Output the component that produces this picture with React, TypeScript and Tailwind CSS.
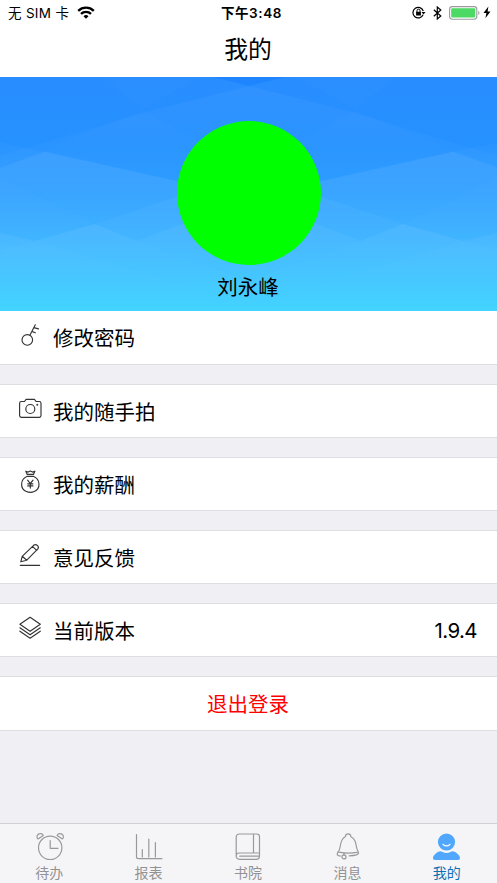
import type { ReactNode } from "react";

const FONT = "font-['Inter','Noto_Sans_CJK_SC',sans-serif]";

function StatusBar() {
  return (
    <div className="relative flex h-[26px] items-center justify-between pl-2 pr-1.5 text-[13.5px] leading-[26px]">
      <div className="flex items-center gap-[8px]">
        <span className="whitespace-pre tracking-[0.3px]">无 SIM 卡</span>
        <svg className="-mt-[2px]" width="18" height="13" viewBox="0 0 18 13" fill="none" stroke="#000" strokeWidth="2.3">
          <path d="M1.2 4.8a11.2 11.2 0 0 1 15.6 0" />
          <path d="M4 7.9a7.2 7.2 0 0 1 10 0" />
          <path d="M6.5 10.2a3.7 3.7 0 0 1 5 0L9 12.8z" fill="#000" stroke="none" />
        </svg>
      </div>
      <span className="absolute inset-x-0 top-0 pl-[6px] text-center font-semibold tracking-[0.6px]">
        下午3:48
      </span>
      <div className="-mt-px flex items-center">
        <svg width="14" height="13" viewBox="0 0 14 13" fill="none" stroke="#000" strokeWidth="1.2">
          <path d="M11.1 8.8A5.3 5.3 0 1 1 11.3 5" />
          <path d="M9.5 5.9h4l-2 2.7z" fill="#000" stroke="none" />
          <rect x="4.1" y="5.8" width="4.8" height="3.7" fill="#000" stroke="none" />
          <path d="M5 6V4.7a1.5 1.5 0 0 1 3 0V6" strokeWidth="1" />
        </svg>
        <svg className="ml-[7px]" width="9" height="14" viewBox="0 0 9 14" fill="none" stroke="#000" strokeWidth="1.2">
          <path d="M.8 3.7l7 6.3-3.5 3V1l3.5 3-7 6.3" />
        </svg>
        <svg className="ml-[7px]" width="32" height="14" viewBox="0 0 32 14">
          <rect x=".6" y=".6" width="27.2" height="12.6" rx="2.6" fill="#fff" stroke="#9b9b9b" strokeWidth="1.1" />
          <rect x="2.2" y="2.2" width="24" height="9.4" rx="1" fill="#4cd964" />
          <path d="M29.3 4.7c1.6.8 1.6 3.6 0 4.4z" fill="#9b9b9b" />
        </svg>
        <svg className="ml-[2px]" width="8" height="13" viewBox="0 0 8 13">
          <path d="M5.4.5L.5 7h2.9l-1 5.2L7.5 5.5H4.6z" />
        </svg>
      </div>
    </div>
  );
}

// left half of the banner, mirrored for the right half
function BannerSide() {
  return (
    <g>
      <path d="M0 79L143 36 249 9V234H0z" fill="url(#beam)" />
      <path d="M0 90.7L143 34 197 63 249 90V120L45 74.7z" fill="url(#beam)" fillOpacity=".5" />
      <path d="M103 0L143 33 200 0z" fill="#fff" fillOpacity=".01" />
      <path d="M0 65.5L45 74.7 0 90.7z" fill="#fff" fillOpacity=".03" />
      <path d="M0 90.7L45 74.7 249 120V234H0z" fill="url(#fade)" />
      <path d="M0 101L95 147 35 164 0 172.5z" fill="#fff" fillOpacity=".02" />
      <path d="M95 147L177 119.7 249 98V202L137 164z" fill="url(#mid)" />
      <path d="M0 172.5L35 164 95 147 137 164 237 200 249 205V234H0z" fill="url(#low)" />
      <path d="M137 164L182 147 249 122V205z" fill="url(#low)" fillOpacity=".6" />
      <path d="M0 155.7L35 164 0 172.5z" fill="#fff" fillOpacity=".05" />
      <path d="M0 172.5L35 164 95 182 230 223 249 229V234H0z" fill="url(#low)" fillOpacity=".3" />
    </g>
  );
}

function Banner() {
  return (
    <div className="relative h-[234px]">
      <svg className="absolute inset-0" width="497" height="234" viewBox="0 0 497 234">
        <defs>
          <linearGradient id="sky" x1="0" y1="0" x2="0" y2="1">
            <stop offset="0" stopColor="#298dff" />
            <stop offset=".3" stopColor="#2592ff" />
            <stop offset=".5" stopColor="#2a9eff" />
            <stop offset=".68" stopColor="#33afff" />
            <stop offset="1" stopColor="#42d5ff" />
          </linearGradient>
          <linearGradient id="beam" gradientUnits="userSpaceOnUse" x1="0" y1="0" x2="0" y2="130">
            <stop offset="0" stopColor="#fff" stopOpacity=".04" />
            <stop offset="1" stopColor="#fff" stopOpacity=".005" />
          </linearGradient>
          <linearGradient id="fade" gradientUnits="userSpaceOnUse" x1="0" y1="74" x2="0" y2="234">
            <stop offset="0" stopColor="#fff" stopOpacity=".09" />
            <stop offset=".6" stopColor="#fff" stopOpacity=".04" />
            <stop offset="1" stopColor="#fff" stopOpacity="0" />
          </linearGradient>
          <linearGradient id="mid" gradientUnits="userSpaceOnUse" x1="0" y1="119" x2="0" y2="200">
            <stop offset="0" stopColor="#fff" stopOpacity=".045" />
            <stop offset="1" stopColor="#fff" stopOpacity="0" />
          </linearGradient>
          <linearGradient id="low" gradientUnits="userSpaceOnUse" x1="0" y1="145" x2="0" y2="230">
            <stop offset="0" stopColor="#fff" stopOpacity=".085" />
            <stop offset="1" stopColor="#fff" stopOpacity="0" />
          </linearGradient>
        </defs>
        <rect width="497" height="234" fill="url(#sky)" />
        <path d="M213 0h72l-36 9z" fill="#1e85ff" />
        <BannerSide />
        <g transform="matrix(-1 0 0 1 498 0)">
          <BannerSide />
        </g>
      </svg>
      <div className="relative flex flex-col items-center pt-[44px]">
        <div className="size-36 rounded-full bg-[#00ff00]" />
        <div className="mt-[7px] pr-px text-[20.5px] leading-8">刘永峰</div>
      </div>
    </div>
  );
}

function RowIcon({ children }: { children: ReactNode }) {
  return (
    <svg
      className="mr-[11px] -mt-[5px]"
      width="24"
      height="24"
      viewBox="0 0 24 24"
      fill="none"
      stroke="#333"
      strokeWidth="1.15"
      strokeLinecap="round"
      strokeLinejoin="round"
    >
      {children}
    </svg>
  );
}

const rows = [
  {
    label: "修改密码",
    icon: (
      <>
        <circle cx="9.3" cy="16.9" r="5.3" />
        <path d="M11.9 12.2L17.3 1.8M15.9 4.6l4.6 1.3M13.8 8.4l3.5 1.4" />
      </>
    ),
  },
  {
    label: "我的随手拍",
    icon: (
      <>
        <path d="M3.3 4.5h3.2L8.1 2.4h8.4l1.6 2.1h3.2c1 0 1.7.7 1.7 1.7v12.4c0 1-.7 1.7-1.7 1.7h-18c-1 0-1.7-.7-1.7-1.7V6.2c0-1 .7-1.7 1.7-1.7z" />
        <circle cx="12.3" cy="12" r="4.5" />
        <circle cx="19.3" cy="7.7" r=".4" fill="#333" />
      </>
    ),
  },
  {
    label: "我的薪酬",
    icon: (
      <>
        <path d="M9.3 6.3C2 9.300 1.800 18.900 8.300 21.500c2.400 1 5.600 1 8 0 6.500-2.600 6.300-12.200-1-15.200zM9 4.400h6.600M9.200 4.200L7.800 1.200l2.400.9 2.100-1 2.200 1 2.400-.9-1.400 3" />
        <path d="M9.600 10.100l2.700 3.500 2.700-3.500M12.300 13.600v4.500M9.700 13.800h5.200M9.700 15.900h5.200" />
      </>
    ),
  },
  {
    label: "意见反馈",
    icon: (
      <>
        <path d="M2.800 18.800l1.400-5.500L15.600 2.300c2.600-2 6 .9 4.300 3.600L8.800 17.200zM4.200 13.300l4.600 3.900M14.500 3.400l4.200 3.900" />
        <path d="M2.400 22.400h19.200" />
      </>
    ),
  },
  {
    label: "当前版本",
    value: "1.9.4",
    icon: (
      <>
        <path d="M12.1 1.300L22.300 8.300 12.100 15.300 1.900 8.300z" />
        <path d="M1.900 11.800l10.200 7 10.200-7M1.900 15.200l10.200 7 10.200-7" />
      </>
    ),
  },
];

const tabs = [
  {
    label: "待办",
    icon: (
      <>
        <circle cx="14.2" cy="15.8" r="11.7" />
        <path d="M14.2 8.600v7.700H22M2 7C.3 5.600 1 2.600 3 1.900s3.500-.3 4.300 1.500zM26.400 7c1.700-1.400 1-4.400-1-5.100s-3.500-.3-4.300 1.500z" />
      </>
    ),
  },
  {
    label: "报表",
    icon: <path d="M1.500 2.500v22.300c0 1.200.7 1.900 1.900 1.900h23.500M7.300 17.500v7.500M13.800 7v18M20.400 10.500v14.500" />,
  },
  {
    label: "书院",
    icon: (
      <path d="M2.200 23.800V5.200c0-2 1.200-3.200 3.200-3.200h17.400c1.700 0 2.700 1 2.700 2.700v19c0 2.300-1.300 3.600-3.400 3.600H5.700c-2.300 0-3.500-1.200-3.500-3.500 0-1.700 1.200-2.800 3-2.800h20.300M19.500 2v19M5.700 24.200h19.500" />
    ),
  },
  {
    label: "消息",
    icon: (
      <>
        <path d="M6.600 24c-2 0-3.600-.8-3.400-2.200.3-1.700 2.200-2.600 2.800-6.300.7-5.100 1.600-9.200 5.300-10.700.3-3.800 5.300-3.800 5.600 0 4.200 1.600 4.900 6 5.700 10.700.5 3 2 4.100 1.900 5.600-.1 1.700-4.500 2.500-9.300 2.700M4.900 20.200c4.800 1 12.500 1.300 18.200.2" />
        <path d="M10 21.300v2" />
        <circle cx="10" cy="24.900" r="2" />
      </>
    ),
  },
  {
    label: "我的",
    active: true,
    icon: (
      <>
        <path d="M7.200 19.200c1.200 0 3.300 1.700 6.300 1.700s5.100-1.700 6.300-1.700c2.800 0 7.200 4.300 7.200 6.500 0 1.500-.7 2.200-2.100 2.200H2.100C.7 27.900 0 27.200 0 25.700c0-2.200 4.400-6.500 7.200-6.500z" fill="#50a7fd" stroke="none" />
        <circle cx="13.500" cy="10" r="8.600" fill="#50a7fd" stroke="none" />
        <path d="M10 12.300c2 2.200 5 2.200 7 0" stroke="#fff" />
      </>
    ),
  },
];

export default function App() {
  return (
    <div className={`${FONT} flex h-[883px] w-[497px] flex-col overflow-hidden bg-[#efeff4] text-black`}>
      <header className="h-[77px] bg-white">
        <StatusBar />
        <h1 className="pr-px text-center text-[23.8px] leading-[48px]">我的</h1>
      </header>
      <Banner />

      <main className="flex flex-1 flex-col gap-[19px]">
        {rows.map((row) => (
          <div
            key={row.label}
            className="flex h-[54px] shrink-0 items-center border-y border-[#dedee2] bg-white pl-[18px] pr-[20px] text-[20.5px] first:border-t-0"
          >
            <RowIcon>{row.icon}</RowIcon>
            <span className="pt-[4px]">{row.label}</span>
            {row.value && <span className="ml-auto pt-[2px] tracking-[-0.6px]">{row.value}</span>}
          </div>
        ))}
        <button className="h-[55px] shrink-0 border-y border-[#dedee2] bg-white pr-px pt-[3px] text-[20.5px] text-[#ff0000]">
          退出登录
        </button>
      </main>

      <nav className="grid h-[60px] shrink-0 grid-cols-5 border-t border-[#cfcfd6] bg-[#f5f5f8]">
        {tabs.map((tab) => (
          <div key={tab.label} className="flex flex-col items-center pt-2">
            <svg
              width="28"
              height="29"
              viewBox="0 0 28 29"
              fill="none"
              stroke="#999"
              strokeWidth="1.2"
              strokeLinecap="round"
              strokeLinejoin="round"
            >
              {tab.icon}
            </svg>
            <span
              className={`pr-px text-[14px] leading-[24px] ${tab.active ? "text-[#0d70b4]" : "text-[#929292]"}`}
            >
              {tab.label}
            </span>
          </div>
        ))}
      </nav>
    </div>
  );
}
